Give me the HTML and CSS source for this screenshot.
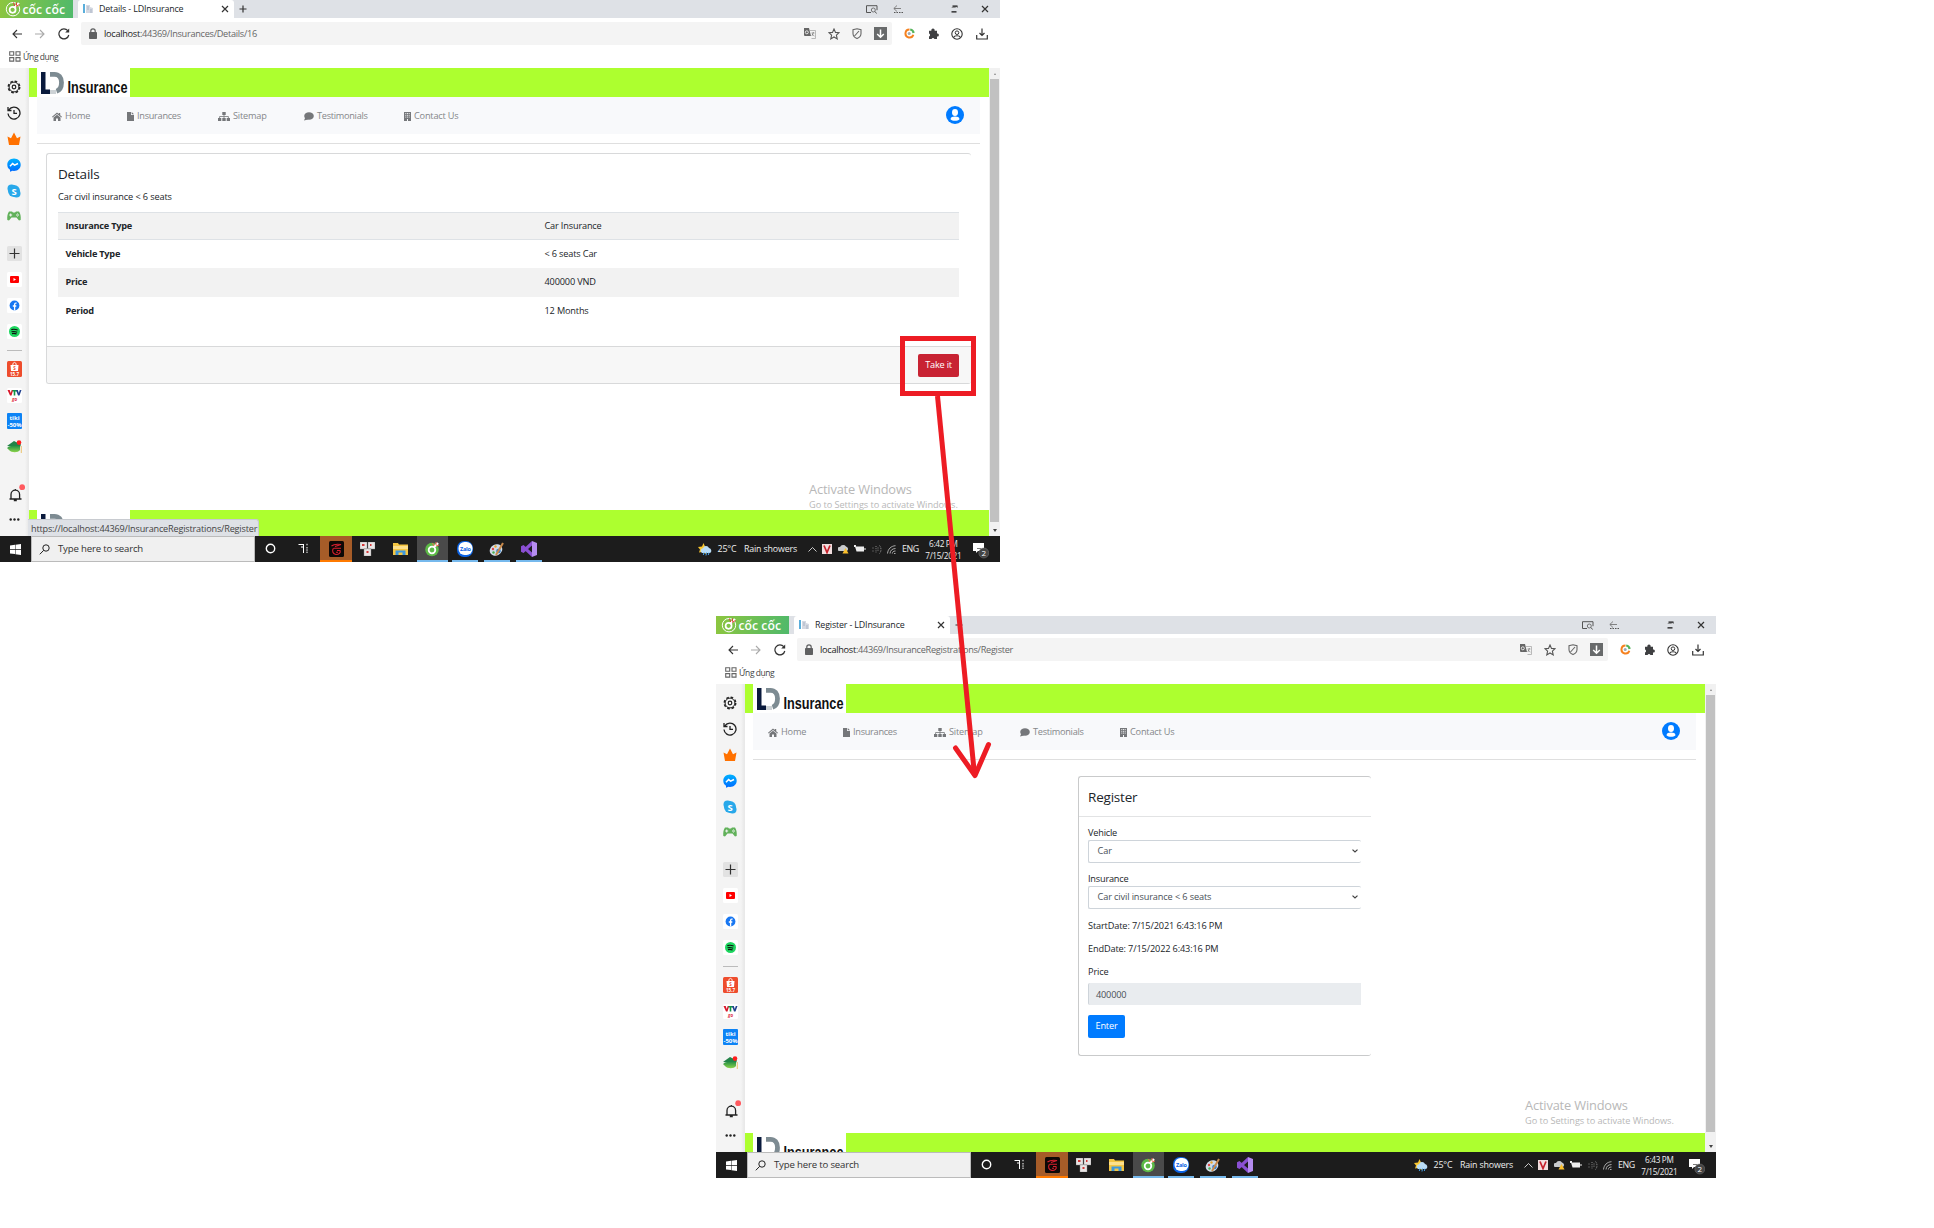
FILE: index.html
```html
<!DOCTYPE html>
<html lang="en">
<head>
<meta charset="utf-8">
<title>LDInsurance - registration flow</title>
<link rel="stylesheet" href="styles.css">
</head>
<body>
<svg class="defs" width="0" height="0">
  <defs>
    <linearGradient id="msg" x1="0" y1="0" x2="0" y2="1"><stop offset="0" stop-color="#00b2ff"/><stop offset="1" stop-color="#006aff"/></linearGradient>
    <linearGradient id="hatg" x1="0" y1="0" x2="0" y2="1"><stop offset="0" stop-color="#1e8a44"/><stop offset="1" stop-color="#8cd54a"/></linearGradient>
  </defs>
</svg>
<svg class="symbols">
  <symbol id="brand" viewBox="0 0 73 18">
    <circle cx="13" cy="9.2" r="6.7" fill="none" stroke="#fff" stroke-width="1"/>
    <circle cx="12.6" cy="9.8" r="3" fill="none" stroke="#fff" stroke-width="1.7"/>
    <path d="M14 8l5-5" stroke="#fff" stroke-width="2.4"/><path d="M13.5 2.500l1.200 3.500M16.500 2.500v3M19.500 4.500l-3.500 2" stroke="#e0403a" stroke-width="1"/>
    <text x="22.5" y="14" textLength="42.5" lengthAdjust="spacingAndGlyphs" class="brand-text">cốc cốc</text>
  </symbol>
  <symbol id="favicon" viewBox="0 0 12 12"><path d="M1 1h2v9H1z" fill="#5aaedb"/><path d="M4 2h4v8H4zM8 4l3 1v5H8" fill="#d5d9e2"/><path d="M5 4h2M5 6h2M9 6v4" stroke="#9aa4b8" stroke-width=".7"/></symbol>
  <symbol id="x" viewBox="0 0 8 8"><path d="M1 1l6 6M7 1L1 7" stroke="#333" stroke-width="1.2" fill="none"/></symbol>
  <symbol id="plus" viewBox="0 0 8 8"><path d="M4 .5v7M.5 4h7" stroke="#333" stroke-width="1.2"/></symbol>
  <symbol id="tabsearch" viewBox="0 0 12 9"><path d="M5 7.500H.5V.7h10.500v4.500" fill="none" stroke="#555" stroke-width="1"/><circle cx="7.300" cy="5" r="2" fill="none" stroke="#666" stroke-width=".9"/><path d="M9 6.500l1.500 2" stroke="#555"/></symbol>
  <symbol id="minim" viewBox="0 0 10 8"><path d="M4 .5L.8 3.5 4 6.5M1 3.5h7" stroke="#777" stroke-width=".9" fill="none"/><path d="M1 7.5h9" stroke="#555" stroke-dasharray="1.5 1"/></symbol>
  <symbol id="restore" viewBox="0 0 7 8"><path d="M1.5 1.2H6.5M.5 6.8H5.5" stroke="#111" stroke-width="1.3"/><path d="M6.3 1v2M.7 2.5h4" stroke="#555" stroke-width=".6"/></symbol>
  <symbol id="back" viewBox="0 0 10 10"><path d="M10 5H1M5 1L1 5l4 4" stroke="#333" stroke-width="1.1" fill="none"/></symbol>
  <symbol id="fwd" viewBox="0 0 10 10"><path d="M0 5h9M5 1l4 4-4 4" stroke="#aaa" stroke-width="1.1" fill="none"/></symbol>
  <symbol id="reload" viewBox="0 0 12 12"><path d="M10.8 7A5 5 0 1 1 9.8 2.7" stroke="#333" stroke-width="1.2" fill="none"/><path d="M11.2.5v4H7.2z" fill="#333"/></symbol>
  <symbol id="lock" viewBox="0 0 8 11"><rect x="0" y="4" width="8" height="7" rx=".8" fill="#5f6061"/><path d="M1.8 4.5V3a2.2 2.2 0 0 1 4.4 0v1.5" stroke="#5f6061" stroke-width="1.2" fill="none"/></symbol>
  <symbol id="translate" viewBox="0 0 12 11"><path d="M0 0h5l2 8H1a1 1 0 0 1-1-1z" fill="#666"/><path d="M6 2.5h5.5v8H7.5" fill="none" stroke="#aaa" stroke-width=".8"/><path d="M7.5 5h3M9.5 4l-1.6 4M8 6l2.4 2" stroke="#777" stroke-width=".7"/><circle cx="2.8" cy="4.3" r="1.5" fill="none" stroke="#fff" stroke-width=".8"/></symbol>
  <symbol id="star" viewBox="0 0 12 12"><path d="M6 1l1.5 3.4 3.6.3-2.7 2.5.8 3.7L6 9l-3.2 1.9.8-3.7L.9 4.7l3.6-.3z" fill="none" stroke="#555" stroke-width="1.1"/></symbol>
  <symbol id="shield" viewBox="0 0 10 12"><path d="M5 .8l4 .8v4c0 2.500-2 4.200-4 5-2-.8-4-2.500-4-5v-4z" fill="none" stroke="#666" stroke-width="1.100"/><path d="M2.500 8l4.500-5" stroke="#666" stroke-width="1.100"/></symbol>
  <symbol id="dlbox" viewBox="0 0 13 13"><path d="M0 0h13v13H0z" fill="#686a6b"/><path d="M6.500 2.500v7.500M3.200 7l3.300 3.200L9.800 7" stroke="#fff" stroke-width="1.500" fill="none"/></symbol>
  <symbol id="cring" viewBox="0 0 11 11"><path d="M5.500 1.500a4 4 0 1 0 3.800 5.200" fill="none" stroke="#f58220" stroke-width="2"/><path d="M6.200 1.500a4 4 0 0 1 3.400 3.500" fill="none" stroke="#56b45c" stroke-width="2.200"/><circle cx="5.200" cy="5.500" r="1.500" fill="#9ba9b5"/></symbol>
  <symbol id="puzzle" viewBox="0 0 11 11"><path d="M1 2.800h2.400a1.700 1.700 0 1 1 3.200 0H9v2.700a1.500 1.500 0 1 1 0 2.900V11H6.400a1.500 1.500 0 0 0-2.800 0H1V8.600a1.600 1.600 0 0 0 0-3z" fill="#3f4042"/></symbol>
  <symbol id="profile" viewBox="0 0 12 12"><circle cx="6" cy="6" r="5.200" fill="none" stroke="#333" stroke-width="1.100"/><circle cx="6" cy="4.700" r="1.800" fill="none" stroke="#333"/><path d="M2.500 9.500c1-2.300 6-2.300 7 0" fill="none" stroke="#333" stroke-width="1.100"/></symbol>
  <symbol id="tray" viewBox="0 0 12 12"><path d="M.7 7v4h10.600V7M6 .5v7M3.500 5L6 7.500 8.500 5" fill="none" stroke="#333" stroke-width="1.200"/></symbol>
  <symbol id="apps" viewBox="0 0 12 11"><path d="M.7.7h4v3.500h-4zM7 .7h4v3.500H7zM.7 6.600h4v3.500h-4zM7 6.600h4v3.500H7z" fill="none" stroke="#666" stroke-width="1.100"/></symbol>
  <symbol id="gear" viewBox="0 0 14 14"><circle cx="7" cy="7" r="5.700" fill="none" stroke="#222" stroke-width="1.500" stroke-dasharray="2.600 1.877"/><circle cx="7" cy="7" r="4.900" fill="none" stroke="#222" stroke-width="1"/><circle cx="7" cy="7" r="1.800" fill="none" stroke="#222" stroke-width="1.200"/></symbol>
  <symbol id="history" viewBox="0 0 14 14"><path d="M2 3.700A6 6 0 1 1 1 7.500M1 1v3.500h3.500M7 4v3.400h3" fill="none" stroke="#222" stroke-width="1.300"/></symbol>
  <symbol id="crown" viewBox="0 0 14 14"><path d="M.5 4.500L4 6.200 7 .5l3 5.700 3.500-1.700L12 13H2z" fill="#ff7100"/></symbol>
  <symbol id="messenger" viewBox="0 0 14 14"><path d="M7 .5c4 0 6.700 2.800 6.700 6.200S11 12.900 7 12.900l-1.500-.2L3 13.700v-2C1.200 10.600.3 8.900.3 6.700.3 3.300 3 .5 7 .5z" fill="url(#msg)"/><path d="M3 8.300l2.600-2.700 2 1.600L11 5.500" stroke="#fff" stroke-width="1.500" fill="none"/></symbol>
  <symbol id="skype" viewBox="0 0 14 14"><circle cx="4.500" cy="4.500" r="4" fill="#28a8ea"/><circle cx="9.500" cy="9.500" r="4" fill="#28a8ea"/><circle cx="7" cy="7" r="6" fill="#28a8ea"/><text x="7" y="10.600" text-anchor="middle" class="skype-s">S</text></symbol>
  <symbol id="gamepad" viewBox="0 0 14 10"><path d="M2 .5h3l1 1h2l1-1h3c1.500 2 2 5 1.700 8.500L12 9.500 9.500 6.500h-5L2 9.500.3 9C0 5.500.5 2.500 2 .5z" fill="#61b15a"/><path d="M3.700 2.500v3M2.200 4h3M9 4h1M11 4h1M10.500 2.500v1M10.500 4.500v1" stroke="#f4f4f4" stroke-width="1"/></symbol>
  <symbol id="plusbox" viewBox="0 0 15 15"><rect width="15" height="15" rx="1.500" fill="#e2e2e2"/><path d="M7.500 2.500v10M2.500 7.500h10" stroke="#333" stroke-width="1.200"/></symbol>
  <symbol id="youtube" viewBox="0 0 15 15"><rect width="15" height="15" rx="1.500" fill="#fff"/><rect x="3" y="4" width="9" height="7" rx="1" fill="#f00"/><path d="M6.500 6l2.500 1.500L6.500 9z" fill="#fff"/></symbol>
  <symbol id="facebook" viewBox="0 0 15 15"><rect width="15" height="15" rx="1.500" fill="#fff"/><circle cx="7.500" cy="7.500" r="4.900" fill="#1877f2"/><path d="M7.600 12.400V6.500c0-1.200.8-1.600 2-1.400M5.800 8h3.500" stroke="#fff" stroke-width="1.300" fill="none"/></symbol>
  <symbol id="spotify" viewBox="0 0 15 15"><rect width="15" height="15" rx="1.500" fill="#fff"/><circle cx="7.500" cy="7.500" r="5.500" fill="#1ed760"/><path d="M4.300 5.600c2.500-.6 4.500-.3 6.300.5M4.500 7.700c2-.5 4-.2 5.700.5M5 9.600c1.700-.4 3.200-.2 4.600.5" stroke="#111" stroke-width="1.100" fill="none"/></symbol>
  <symbol id="shopee" viewBox="0 0 15 16"><rect width="15" height="16" rx="1.500" fill="#ee4d2d"/><path d="M3.500 4h8l-.5 6H4z" fill="#fff"/><path d="M5.800 4c0-3.500 3.400-3.500 3.400 0" fill="none" stroke="#fff" stroke-width=".9"/><text x="7.500" y="9" text-anchor="middle" class="tiny red">S</text><text x="7.500" y="14.600" text-anchor="middle" class="tiny">15.7</text></symbol>
  <symbol id="vtv" viewBox="0 0 15 15"><rect width="15" height="15" rx="1.500" fill="#fff"/><path d="M.5 2h2.200l1 3 1-3h1.500L4.500 7.500H3z" fill="#d8172a"/><path d="M5.500 2H10v1.500H8.300v4H6.700v-4H5.500z" fill="#119447"/><path d="M9 2h1.800l1 3 1-3h1.700l-2 5.500h-1.500z" fill="#21418f"/><text x="7.500" y="12.500" text-anchor="middle" class="tiny go">go</text></symbol>
  <symbol id="tiki" viewBox="0 0 15 16"><rect width="15" height="16" rx="1" fill="#0d83f5"/><text x="7.500" y="7" text-anchor="middle" class="tiki">tiki</text><text x="7.500" y="13.500" text-anchor="middle" textLength="14" lengthAdjust="spacingAndGlyphs" class="tiki">-50%</text></symbol>
  <symbol id="hat" viewBox="0 0 15 14"><path d="M0 6l7-5L14 4.500 13 7z" fill="#238348"/><path d="M2 6.500c3-1.500 8-1.500 11 0V10c-2 3-8.500 3-11 0L0 8z" fill="url(#hatg)"/><path d="M14.300 6v7" stroke="#e8b64c" stroke-width=".8"/><circle cx="12" cy="2.600" r="2.300" fill="#ff1e1e"/></symbol>
  <symbol id="bell" viewBox="0 0 18 18"><path d="M2.500 15h12M4 15V10.500a4.300 4.300 0 0 1 8.600 0V15M8.300 5v1.200M6.800 16.500h3" fill="none" stroke="#222" stroke-width="1.300"/><circle cx="15.200" cy="3.200" r="2.900" fill="#ff5a5f"/></symbol>
  <symbol id="dots" viewBox="0 0 11 3"><circle cx="1.700" cy="1.500" r="1.200" fill="#222"/><circle cx="5.500" cy="1.500" r="1.200" fill="#222"/><circle cx="9.300" cy="1.500" r="1.200" fill="#222"/></symbol>
  <symbol id="ldlogo" viewBox="0 0 93 29"><path d="M4 4h4.500v17.500H13V26H4z" fill="#0a1a3c"/><path d="M13 6.300h4.500c4 0 7 3 7 8.300 0 5-2.200 7.800-5 8.700" fill="none" stroke="#7d8b92" stroke-width="4.800"/><path d="M14 22v4M16 22v4M18 22v4" stroke="#9aa5ab" stroke-width="1"/><text x="30.500" y="25" textLength="60" lengthAdjust="spacingAndGlyphs" class="ld-text">Insurance</text></symbol>
  <symbol id="home" viewBox="0 0 10 9"><path d="M0 4.800L5 .6l1.700 1.400V1h1.500v2.300L10 4.800l-.6.700L5 2 .6 5.500z" fill="#75777a"/><path d="M1.500 5.500L5 2.800l3.500 2.700V9H6V6.500H4V9H1.500z" fill="#75777a"/></symbol>
  <symbol id="file" viewBox="0 0 7 9"><path d="M0 0h4v3h3v6H0z" fill="#75777a"/><path d="M4.700 0L7 2.300H4.700z" fill="#75777a"/></symbol>
  <symbol id="sitemap" viewBox="0 0 12 9"><path d="M4.300 0h3.400v3H4.300zM0 6h3.300v3H0zM4.300 6h3.400v3H4.300zM8.700 6H12v3H8.700z" fill="#75777a"/><path d="M6 3v3M1.600 6V4.500h8.800V6" stroke="#75777a" fill="none" stroke-width=".8"/></symbol>
  <symbol id="comment" viewBox="0 0 10 9"><ellipse cx="5" cy="4" rx="4.800" ry="3.800" fill="#75777a"/><path d="M1.500 5L0 8.500l4-1z" fill="#75777a"/></symbol>
  <symbol id="building" viewBox="0 0 7 9"><path d="M0 0h7v9H0z" fill="#75777a"/><path d="M1.800 1v4.800M3.500 1v4.800M5.200 1v4.800" stroke="#f8f9fb" stroke-dasharray="1 .8" stroke-width=".9"/><path d="M3 7h1v2H3z" fill="#f8f9fb"/></symbol>
  <symbol id="user" viewBox="0 0 18 18"><circle cx="9" cy="9" r="9" fill="#007bff"/><ellipse cx="9" cy="6.500" rx="3" ry="3.400" fill="#fff"/><path d="M4.500 13.200c0-2 2-2.700 4.500-2.700s4.500.7 4.500 2.700c-2 2-7 2-9 0z" fill="#fff"/></symbol>
  <symbol id="chev" viewBox="0 0 6 4"><path d="M.5.600L3 3 5.500.6" fill="none" stroke="#444" stroke-width="1.200"/></symbol>
  <symbol id="win" viewBox="0 0 11 11"><path d="M0 1.500L5 .8V5H0zM5.500.7L11 0v5H5.500zM0 5.800h5v4.300L0 9.500zM5.500 5.800H11V11l-5.500-.7z" fill="#fff"/></symbol>
  <symbol id="mag" viewBox="0 0 11 11"><circle cx="7" cy="4" r="3.200" fill="none" stroke="#222" stroke-width="1"/><path d="M4.700 6.300L.8 10.300" stroke="#222" stroke-width="1"/></symbol>
  <symbol id="cortana" viewBox="0 0 11 11"><circle cx="5.500" cy="5.500" r="4.200" fill="none" stroke="#fff" stroke-width="1.400"/></symbol>
  <symbol id="taskview" viewBox="0 0 11 11"><path d="M.5 1.500h5M5.500 1v9M3 4h2.500" stroke="#fff" fill="none"/><path d="M9 .8v2M9 4v6" stroke="#fff" stroke-dasharray="1.500 .8"/></symbol>
  <symbol id="garena" viewBox="0 0 15 16"><rect width="15" height="16" rx="1.500" fill="#0d0806"/><path d="M2.500 5c3-2.500 6-2 9.500-1.500L6 5.500M4.500 7c-2 3-.5 6 2.500 6.500 3 0 5-1.500 4-4H8M5 7.300h7M7 11.200h2" stroke="#d92030" stroke-width="1.100" fill="none"/></symbol>
  <symbol id="cards" viewBox="0 0 15 14"><path d="M0 0h7v7H0zM8 0h7v7H8zM4 6.500h7V14H4z" fill="#e9e5e5" stroke="#888" stroke-width=".4"/><path d="M2 2h2.500v2H2zM10 2h1.500v2H10zM6.500 9h2v2h-2z" fill="#d43a3a"/></symbol>
  <symbol id="folder" viewBox="0 0 15 14"><path d="M0 1h5l1 1.500h9V13H0z" fill="#f5c642"/><path d="M0 4h15v3H0z" fill="#fde08c"/><path d="M2.500 13V8.500h10V13h-3v-2.500h-4V13z" fill="#3e98dd"/></symbol>
  <symbol id="coc" viewBox="0 0 15 16"><circle cx="7" cy="8.500" r="6.800" fill="#5cb947"/><circle cx="7" cy="9" r="3.300" fill="none" stroke="#fff" stroke-width="1.800"/><path d="M9 6l4-4" stroke="#fff" stroke-width="2.400"/><path d="M7.500 2l1.500 3M11 1v3M14 4l-3 1" stroke="#f36b4f" stroke-width="1"/></symbol>
  <symbol id="zalo" viewBox="0 0 16 16"><rect width="16" height="16" rx="7" fill="#0b63e5"/><rect x="1.500" y="1" width="14" height="13" rx="6" fill="#fff"/><text x="8.300" y="10" text-anchor="middle" class="zalo">Zalo</text></symbol>
  <symbol id="paint" viewBox="0 0 16 16"><ellipse cx="7" cy="9" rx="6.500" ry="5.500" transform="rotate(-30 7 9)" fill="#cfdce8"/><circle cx="4" cy="8" r="1.200" fill="#e04444"/><circle cx="6.500" cy="5.500" r="1.200" fill="#e7a52c"/><circle cx="4.500" cy="11.500" r="1.200" fill="#4caf50"/><circle cx="9.500" cy="10" r="2.300" fill="#2f7fd0"/><path d="M7 14l7-12" stroke="#c98a4b" stroke-width="2"/></symbol>
  <symbol id="vs" viewBox="0 0 16 16"><path d="M11 0l5 2v12l-5 2z" fill="#b58cf0"/><path d="M11 0v4.500L2.500 12 0 10.800V5.200L2.500 4 11 11.500V16L4 9.500 2 11V5l2 1.500z" fill="#8a4fd3"/></symbol>
  <symbol id="weather" viewBox="0 0 14 13"><path d="M5.500 0l1.500 3.500 3 1-2.500 2.500.5 4-4-2-3 .5 1-3L0 4l4-.5z" fill="#f8c52e"/><path d="M4 10a2.500 2.500 0 0 1 1-4.700 3.200 3.200 0 0 1 6-.3 2.700 2.700 0 0 1 1 5z" fill="#b9dcf5"/><path d="M6 9.500l-.7 2.500M8.500 9.500L8 12.500M11 9.500l-.7 2.500" stroke="#4aa3ea" stroke-width="1"/></symbol>
  <symbol id="up" viewBox="0 0 9 5"><path d="M.5 4.500l4-4 4 4" fill="none" stroke="#ddd" stroke-width=".9"/></symbol>
  <symbol id="vkey" viewBox="0 0 10 10"><path d="M0 0h10v10H0z" fill="#f1dede"/><path d="M2 1.500l3 7 3-7" fill="none" stroke="#c6202b" stroke-width="1.700"/></symbol>
  <symbol id="cloud" viewBox="0 0 11 10"><path d="M1 7a2 2 0 0 1 1-4 3.500 3.500 0 0 1 6-.500A2.500 2.500 0 0 1 9 7z" fill="#c9cbcd"/><path d="M7.500 4l3 5.500h-6z" fill="#fbc02d"/></symbol>
  <symbol id="battery" viewBox="0 0 12 8"><path d="M1 1.500h9v5H2.500z" fill="#eee"/><path d="M10.500 3h1v2h-1zM0 0h2v2H0z" fill="#eee"/></symbol>
  <symbol id="speaker" viewBox="0 0 10 9"><path d="M.5 3h2M.5 6h2M4 1v7M6 2.500v4" stroke="#aaa" stroke-width=".8" stroke-dasharray="1 1.200"/><path d="M7.500.5c2 2 2 6 0 8" fill="none" stroke="#999" stroke-width=".8" stroke-dasharray="1.500 1"/></symbol>
  <symbol id="wifi" viewBox="0 0 9 9"><path d="M.5 8.500C1 4 4 1 8.500.7M3 8.500c.3-3 2-4.800 5.500-5M5.300 8.500c.2-1.500 1-2.500 3.200-2.500M7 8.500h1.500" fill="none" stroke="#bbb" stroke-width=".9"/></symbol>
  <symbol id="notif" viewBox="0 0 16 16"><path d="M0 0h11v8H5l-2 2V8H0z" fill="#fff"/><circle cx="10.800" cy="10" r="5" fill="#444" stroke="#777" stroke-width=".5"/><path d="M4 5.500h4" stroke="#444" stroke-width=".7"/><text x="10.800" y="12.800" text-anchor="middle" class="badge">2</text></symbol>
</svg>

<div class="window details-window">
  <div class="tabstrip">
    <div class="brand"><svg width="73" height="18"><use href="#brand"/></svg></div>
    <div class="tab"><svg width="12" height="12"><use href="#favicon"/></svg><span class="tab-title">Details - LDInsurance</span><svg width="8" height="8"><use href="#x"/></svg></div>
    <svg class="newtab" width="8" height="8"><use href="#plus"/></svg>
    <div class="winctl"><svg width="12" height="9"><use href="#tabsearch"/></svg><svg width="10" height="8"><use href="#minim"/></svg><svg class="restore" width="7" height="8"><use href="#restore"/></svg><svg width="8" height="8"><use href="#x"/></svg></div>
  </div>
  <div class="toolbar">
    <svg width="10" height="10"><use href="#back"/></svg><svg width="10" height="10"><use href="#fwd"/></svg><svg width="12" height="12"><use href="#reload"/></svg>
    <div class="address"><svg width="8" height="11"><use href="#lock"/></svg><span class="url"><b>localhost</b>:44369/Insurances/Details/16</span>
      <div class="address-icons"><svg width="12" height="11"><use href="#translate"/></svg><svg width="12" height="12"><use href="#star"/></svg><svg width="10" height="12"><use href="#shield"/></svg><svg width="13" height="13"><use href="#dlbox"/></svg></div></div>
    <div class="ext"><svg width="11" height="11"><use href="#cring"/></svg><svg width="11" height="11"><use href="#puzzle"/></svg><svg width="12" height="12"><use href="#profile"/></svg><svg width="12" height="12"><use href="#tray"/></svg></div>
  </div>
  <div class="bookmarks"><svg width="12" height="11"><use href="#apps"/></svg><span>Ứng dụng</span></div>
  <div class="main">
    <div class="side">
      <svg width="14" height="14"><use href="#gear"/></svg><svg width="14" height="14"><use href="#history"/></svg><svg width="14" height="14"><use href="#crown"/></svg><svg width="14" height="14"><use href="#messenger"/></svg><svg width="14" height="14"><use href="#skype"/></svg><svg width="14" height="10"><use href="#gamepad"/></svg>
      <svg width="15" height="15"><use href="#plusbox"/></svg><svg width="15" height="15"><use href="#youtube"/></svg><svg width="15" height="15"><use href="#facebook"/></svg><svg width="15" height="15"><use href="#spotify"/></svg>
      <i class="rule"></i>
      <svg width="15" height="16"><use href="#shopee"/></svg><svg class="vtv" width="15" height="15"><use href="#vtv"/></svg><svg width="15" height="16"><use href="#tiki"/></svg><svg width="15" height="14"><use href="#hat"/></svg>
      <svg class="bell" width="18" height="18"><use href="#bell"/></svg><svg class="more" width="11" height="3"><use href="#dots"/></svg>
    </div>
    <div class="page">
      <div class="banner"><svg class="logo" width="93" height="29"><use href="#ldlogo"/></svg></div>
      <nav class="nav">
        <a class="n1"><svg width="10" height="9"><use href="#home"/></svg>Home</a><a class="n2"><svg width="7" height="9"><use href="#file"/></svg>Insurances</a><a class="n3"><svg width="12" height="9"><use href="#sitemap"/></svg>Sitemap</a><a class="n4"><svg width="10" height="9"><use href="#comment"/></svg>Testimonials</a><a class="n5"><svg width="7" height="9"><use href="#building"/></svg>Contact Us</a>
        <svg class="user" width="18" height="18"><use href="#user"/></svg>
      </nav>
      <hr>
      <section class="card details">
        <div class="details-body">
          <h4>Details</h4>
          <p>Car civil insurance &lt; 6 seats</p>
          <div class="table">
            <div class="row head"><b>Insurance Type</b><span>Car Insurance</span></div>
            <div class="row"><b>Vehicle Type</b><span>&lt; 6 seats Car</span></div>
            <div class="row odd"><b>Price</b><span>400000 VND</span></div>
            <div class="row"><b>Period</b><span>12 Months</span></div>
          </div>
        </div>
        <div class="card-footer"><button class="btn danger">Take it</button></div>
      </section>
      <div class="watermark"><div>Activate Windows</div><small>Go to Settings to activate Windows.</small></div>
      <div class="banner bottom"><svg class="logo" width="93" height="29"><use href="#ldlogo"/></svg></div>
    </div>
    <div class="scroll"><i class="arr-up"></i><i class="thumb"></i><i class="arr-down"></i></div>
    <div class="status">https://localhost:44369/InsuranceRegistrations/Register</div>
  </div>
  <div class="taskbar">
    <div class="start"><svg width="11" height="11"><use href="#win"/></svg></div>
    <div class="search"><svg width="11" height="11"><use href="#mag"/></svg><span>Type here to search</span></div>
    <div class="task w31"><svg width="11" height="11"><use href="#cortana"/></svg></div><div class="task w34"><svg width="11" height="11"><use href="#taskview"/></svg></div><div class="task garena"><svg width="15" height="16"><use href="#garena"/></svg></div><div class="task w31"><svg width="15" height="14"><use href="#cards"/></svg></div><div class="task w34"><svg width="15" height="14"><use href="#folder"/></svg></div><div class="task active"><svg width="15" height="16"><use href="#coc"/></svg></div><div class="task open"><svg width="16" height="16"><use href="#zalo"/></svg></div><div class="task open"><svg width="16" height="16"><use href="#paint"/></svg></div><div class="task open"><svg width="16" height="16"><use href="#vs"/></svg></div>
    <div class="systray"><svg width="14" height="13"><use href="#weather"/></svg><span class="temp">25°C</span><span class="rain">Rain showers</span><svg width="9" height="5"><use href="#up"/></svg><svg width="10" height="10"><use href="#vkey"/></svg><svg width="11" height="10"><use href="#cloud"/></svg><svg width="12" height="8"><use href="#battery"/></svg><svg width="10" height="9"><use href="#speaker"/></svg><svg width="9" height="9"><use href="#wifi"/></svg><span class="lang">ENG</span><span class="clock">6:42 PM<br>7/15/2021</span><svg class="notif" width="16" height="16"><use href="#notif"/></svg></div>
  </div>
</div>

<div class="window register-window">
  <div class="tabstrip">
    <div class="brand"><svg width="73" height="18"><use href="#brand"/></svg></div>
    <div class="tab"><svg width="12" height="12"><use href="#favicon"/></svg><span class="tab-title">Register - LDInsurance</span><svg width="8" height="8"><use href="#x"/></svg></div>
    <svg class="newtab" width="8" height="8"><use href="#plus"/></svg>
    <div class="winctl"><svg width="12" height="9"><use href="#tabsearch"/></svg><svg width="10" height="8"><use href="#minim"/></svg><svg class="restore" width="7" height="8"><use href="#restore"/></svg><svg width="8" height="8"><use href="#x"/></svg></div>
  </div>
  <div class="toolbar">
    <svg width="10" height="10"><use href="#back"/></svg><svg width="10" height="10"><use href="#fwd"/></svg><svg width="12" height="12"><use href="#reload"/></svg>
    <div class="address"><svg width="8" height="11"><use href="#lock"/></svg><span class="url"><b>localhost</b>:44369/InsuranceRegistrations/Register</span>
      <div class="address-icons"><svg width="12" height="11"><use href="#translate"/></svg><svg width="12" height="12"><use href="#star"/></svg><svg width="10" height="12"><use href="#shield"/></svg><svg width="13" height="13"><use href="#dlbox"/></svg></div></div>
    <div class="ext"><svg width="11" height="11"><use href="#cring"/></svg><svg width="11" height="11"><use href="#puzzle"/></svg><svg width="12" height="12"><use href="#profile"/></svg><svg width="12" height="12"><use href="#tray"/></svg></div>
  </div>
  <div class="bookmarks"><svg width="12" height="11"><use href="#apps"/></svg><span>Ứng dụng</span></div>
  <div class="main">
    <div class="side">
      <svg width="14" height="14"><use href="#gear"/></svg><svg width="14" height="14"><use href="#history"/></svg><svg width="14" height="14"><use href="#crown"/></svg><svg width="14" height="14"><use href="#messenger"/></svg><svg width="14" height="14"><use href="#skype"/></svg><svg width="14" height="10"><use href="#gamepad"/></svg>
      <svg width="15" height="15"><use href="#plusbox"/></svg><svg width="15" height="15"><use href="#youtube"/></svg><svg width="15" height="15"><use href="#facebook"/></svg><svg width="15" height="15"><use href="#spotify"/></svg>
      <i class="rule"></i>
      <svg width="15" height="16"><use href="#shopee"/></svg><svg class="vtv" width="15" height="15"><use href="#vtv"/></svg><svg width="15" height="16"><use href="#tiki"/></svg><svg width="15" height="14"><use href="#hat"/></svg>
      <svg class="bell" width="18" height="18"><use href="#bell"/></svg><svg class="more" width="11" height="3"><use href="#dots"/></svg>
    </div>
    <div class="page">
      <div class="banner"><svg class="logo" width="93" height="29"><use href="#ldlogo"/></svg></div>
      <nav class="nav">
        <a class="n1"><svg width="10" height="9"><use href="#home"/></svg>Home</a><a class="n2"><svg width="7" height="9"><use href="#file"/></svg>Insurances</a><a class="n3"><svg width="12" height="9"><use href="#sitemap"/></svg>Sitemap</a><a class="n4"><svg width="10" height="9"><use href="#comment"/></svg>Testimonials</a><a class="n5"><svg width="7" height="9"><use href="#building"/></svg>Contact Us</a>
        <svg class="user" width="18" height="18"><use href="#user"/></svg>
      </nav>
      <hr>
      <section class="card register">
        <h4>Register</h4>
        <form>
          <label>Vehicle</label>
          <div class="select"><span>Car</span><svg width="6" height="4"><use href="#chev"/></svg></div>
          <label class="second">Insurance</label>
          <div class="select"><span>Car civil insurance &lt; 6 seats</span><svg width="6" height="4"><use href="#chev"/></svg></div>
          <p class="start-date">StartDate: 7/15/2021 6:43:16 PM</p>
          <p class="end-date">EndDate: 7/15/2022 6:43:16 PM</p>
          <p>Price</p>
          <div class="readonly">400000</div>
          <button class="btn primary">Enter</button>
        </form>
      </section>
      <div class="watermark"><div>Activate Windows</div><small>Go to Settings to activate Windows.</small></div>
      <div class="banner bottom"><svg class="logo" width="93" height="29"><use href="#ldlogo"/></svg></div>
    </div>
    <div class="scroll"><i class="arr-up"></i><i class="thumb"></i><i class="arr-down"></i></div>
  </div>
  <div class="taskbar">
    <div class="start"><svg width="11" height="11"><use href="#win"/></svg></div>
    <div class="search"><svg width="11" height="11"><use href="#mag"/></svg><span>Type here to search</span></div>
    <div class="task w31"><svg width="11" height="11"><use href="#cortana"/></svg></div><div class="task w34"><svg width="11" height="11"><use href="#taskview"/></svg></div><div class="task garena"><svg width="15" height="16"><use href="#garena"/></svg></div><div class="task w31"><svg width="15" height="14"><use href="#cards"/></svg></div><div class="task w34"><svg width="15" height="14"><use href="#folder"/></svg></div><div class="task active"><svg width="15" height="16"><use href="#coc"/></svg></div><div class="task open"><svg width="16" height="16"><use href="#zalo"/></svg></div><div class="task open"><svg width="16" height="16"><use href="#paint"/></svg></div><div class="task open"><svg width="16" height="16"><use href="#vs"/></svg></div>
    <div class="systray"><svg width="14" height="13"><use href="#weather"/></svg><span class="temp">25°C</span><span class="rain">Rain showers</span><svg width="9" height="5"><use href="#up"/></svg><svg width="10" height="10"><use href="#vkey"/></svg><svg width="11" height="10"><use href="#cloud"/></svg><svg width="12" height="8"><use href="#battery"/></svg><svg width="10" height="9"><use href="#speaker"/></svg><svg width="9" height="9"><use href="#wifi"/></svg><span class="lang">ENG</span><span class="clock">6:43 PM<br>7/15/2021</span><svg class="notif" width="16" height="16"><use href="#notif"/></svg></div>
  </div>
</div>

<svg class="annotation" width="1934" height="1228">
  <rect x="902.500" y="338.500" width="71" height="55"/>
  <path d="M937.500 396L974.500 775" />
  <path class="tip" d="M955.500 748L975 775.500L988.500 744.500"/>
</svg>
</body>
</html>
```
FILE: styles.css
```css
* { box-sizing: border-box; }
body { margin: 0; width: 1934px; height: 1228px; position: relative; overflow: hidden; background: #fff; font: 9.2px/12px "Open Sans", "Noto Sans", sans-serif; letter-spacing: -.2px; color: #212529; }
svg { display: block; flex: none; }
.defs { position: absolute; }
.symbols { display: none; }
h4, p { margin: 0; font-weight: 400; }
i { display: block; }
b { font-weight: 700; }

.window { position: absolute; width: 1000px; height: 562px; display: flex; flex-direction: column; overflow: hidden; background: #fff; white-space: nowrap; }
.details-window { left: 0; top: 0; }
.register-window { left: 716px; top: 616px; }

.tabstrip { height: 18px; flex: none; display: flex; align-items: center; background: #dee1e6; }
.brand { width: 73px; height: 18px; background: linear-gradient(100deg, #8dc63f, #4fb96b); }
.brand-text { font: 600 13px "Open Sans", sans-serif; fill: #fff; letter-spacing: 0; }
.tab { width: 156px; height: 18px; margin-left: 5px; padding: 0 5px 0 4px; display: flex; align-items: center; background: #fff; border-radius: 3px 3px 0 0; }
.tab-title { flex: 1; padding-left: 5px; font-size: 8.9px; letter-spacing: -.15px; }
.newtab { margin-left: 5px; }
.winctl { margin-left: auto; padding-right: 11px; display: flex; align-items: center; gap: 15px; }
.winctl .restore { margin: 0 10px 0 32px; }
.winctl .restore { margin: 0 8px 0 33px; }

.toolbar { height: 27px; flex: none; display: flex; align-items: center; padding: 4px 12px 0 12px; gap: 13px; }
.address { flex: none; width: 811px; height: 23px; padding: 0 5px 0 8px; margin-left: -2px; display: flex; align-items: center; background: #f4f4f4; border-radius: 2px; }
.url { padding-left: 7px; color: #666; letter-spacing: -.29px; }
.url b { font-weight: 400; color: #222; }
.address-icons { margin-left: auto; display: flex; align-items: center; gap: 12px; }
.ext { flex: 1; margin-left: -1px; display: flex; align-items: center; justify-content: space-between; }

.bookmarks { height: 23px; flex: none; display: flex; align-items: center; gap: 2px; padding-left: 9px; font-size: 8.5px; color: #444; letter-spacing: -.45px; }

.main { position: relative; height: 468px; flex: none; display: flex; overflow: hidden; }
.side { width: 29px; flex: none; padding: 12px 1px 0 0; display: flex; flex-direction: column; align-items: center; gap: 12px; background: linear-gradient(90deg, #f4f4f4 25px, #e9e9e9 28px); }
.side > svg:nth-child(6) { margin: 1px 0 13px; }
.side > svg:nth-child(n+7) { margin-bottom: -1px; }
.rule { width: 15px; height: 1px; margin-bottom: -2px; background: #bbb; }
.side > .vtv:nth-child(n+7) { margin-bottom: -2px; }
.side .bell { margin-top: 19px; margin-left: 3px; }
.side .more { margin-top: 5px; }

.page { width: 960px; flex: none; display: flex; flex-direction: column; background: #fff; }
.banner { height: 29px; flex: none; padding-left: 8px; overflow: hidden; background: #adff2f; }
.details-window .bottom { height: 26px; }
.register-window .bottom { height: 19px; }
.logo { background: #fff; }
.ld-text { font: 700 17px "Liberation Sans Narrow", "Liberation Sans", sans-serif; fill: #111; letter-spacing: 0; }
.nav { height: 37px; flex: none; margin: 0 9px 0 8px; padding: 1px 16px 0 15px; display: flex; align-items: center; background: #f8f9fb; color: #85878a; }
.nav a { display: flex; align-items: center; gap: 3px; }
.n1 { width: 75px; } .n2 { width: 91px; } .n3 { width: 86px; } .n4 { width: 100px; }
.n2, .n4 { letter-spacing: -.28px; }
.nav .user { margin: -3px 0 0 auto; }
hr { width: 943px; height: 1px; flex: none; margin: 9px 9px 0 8px; border: 0; background: #dfdfdf; }
.card { flex: none; border: 1px solid #d8d9da; border-right: 0; border-radius: 3px; overflow: hidden; }
.details { width: 925px; height: 231px; margin: 9px 0 0 17px; }
.details-body { height: 192px; padding: 10px 12px 0 11px; }
h4 { font-size: 13.5px; line-height: 20px; font-weight: 500; }
.details-body p { margin-top: 5.5px; line-height: 14px; letter-spacing: -.12px; }
.table { margin-top: 8.500px; }
.row { height: 28.200px; padding: 0 8px 0 7.500px; display: grid; grid-template-columns: 479px 1fr; align-items: center; letter-spacing: -.17px; }
.row b { letter-spacing: -.23px; }
.head, .odd { background: #f2f2f2; }
.head { border-top: 1px solid #dee2e6; border-bottom: 1px solid #dee2e6; }
.card-footer { height: 38px; padding-right: 12px; display: flex; align-items: center; justify-content: flex-end; background: #f7f7f7; border-top: 1px solid #d8d9da; }
.btn { height: 23px; padding: 0 0 1px; border: 0; border-radius: 2px; color: #fff; font: inherit; letter-spacing: -.2px; }
.danger { width: 41px; background: #c82333; }
.primary { width: 37px; margin-top: 10px; background: #007bff; display: block; }
.watermark { width: 160px; margin: auto 0 -1px 780px; color: #b8b8b8; }
.watermark div { font-size: 12.800px; line-height: 17px; letter-spacing: -.15px; }
.watermark small { display: block; font-size: 9.200px; line-height: 13px; letter-spacing: -.05px; }
.register-window .watermark { margin-bottom: 6px; }

.register { width: 293px; height: 280px; margin: 16px 0 0 333px; border-color: #c9cacb; }
.register h4 { height: 40px; padding: 10px 0 0 9px; border-bottom: 1px solid #e2e3e4; }
form { padding: 10px 10px 0 9px; display: flex; flex-direction: column; }
label { height: 13px; line-height: 12px; }
.second { margin-top: 10.500px; }
.select { height: 22.500px; padding: 0 3.500px 0 8.500px; display: flex; align-items: center; justify-content: space-between; border: 1px solid #ced4da; border-right: 0; border-radius: 2px; color: #495057; letter-spacing: -.12px; }
form p { height: 23.400px; line-height: 11px; letter-spacing: -.14px; }
.start-date { margin-top: 11px; }
form p:nth-of-type(3) { height: 17px; }
.readonly { height: 22px; padding: 0 7px; line-height: 23px; background: #e9ecef; border-left: 1px solid #ced4da; border-radius: 2px 0 0 2px; color: #495057; }

.scroll { width: 11px; flex: none; padding: 0 1px; display: flex; flex-direction: column; align-items: center; background: #f1f1f1; }
.arr-up { margin: 5px 0 4px; border: 1.500px solid transparent; border-top: 0; border-bottom: 2px solid #888; }
.thumb { width: 9px; height: 443px; background: #c1c1c1; }
.register-window .thumb { height: 437px; }
.arr-down { margin-top: 7px; border: 2.500px solid transparent; border-bottom: 0; border-top: 3px solid #444; }
.register-window .arr-down { margin-top: 13px; }
.status { position: absolute; left: 28px; bottom: 0; width: 231px; height: 17px; padding: 3px 0 0 3px; background: #dee1e6; border: 1px solid #c8cbd0; border-width: 1px 1px 0 0; border-radius: 0 3px 0 0; color: #444; font-size: 9.100px; letter-spacing: -.17px; }

.taskbar { height: 26px; flex: none; display: flex; background: #1c1c1c; color: #eee; }
.start { width: 31px; display: flex; align-items: center; justify-content: center; }
.search { width: 224px; padding-left: 7px; display: flex; align-items: center; gap: 8px; background: #f0f0f0; border: 1px solid #bbb; color: #333; font-size: 9.600px; letter-spacing: -.17px; }
.task { display: flex; align-items: center; justify-content: center; border-bottom: 2px solid transparent; border-top: 1px solid transparent; }
.w31 { width: 31px; }
.w34 { width: 34px; }
.garena { width: 32px; background: #a65c28; border-color: #a65c28 #a65c28 #ff7a00; }
.active { width: 31px; background: #4a4a4a; border-top-color: #4a4a4a; border-bottom-color: #76b9ed; }
.open { width: 26px; margin-left: 4px; margin-right: 2px; border-bottom-color: #76b9ed; }
.systray { flex: none; width: 291px; margin-left: auto; margin-right: 11px; display: flex; align-items: center; justify-content: space-between; font-size: 8.900px; letter-spacing: -.17px; }
.rain { margin: 0 5px 0 2px; }
.lang { letter-spacing: -.4px; }
.clock { width: 40px; text-align: center; font-size: 8.200px; letter-spacing: -.3px; margin: 1px 4px 0 -1px; }
.notif { margin-top: 3px; }
.skype-s { font: 700 9.500px "Open Sans", sans-serif; fill: #fff; }
.tiny { font: 700 4.500px "Open Sans", sans-serif; fill: #fff; letter-spacing: 0; }
.red { fill: #ee4d2d; }
.go { fill: #e03a4a; font-style: italic; }
.tiki { font: 700 6px "Open Sans", sans-serif; fill: #fff; letter-spacing: 0; }
.zalo { font: 700 5.500px "Open Sans", sans-serif; fill: #0b63e5; }
.badge { font: 400 8px "Open Sans", sans-serif; fill: #fff; }

.annotation { position: absolute; left: 0; top: 0; fill: none; stroke: #ed1c24; stroke-width: 5; pointer-events: none; }
.tip { stroke-linecap: round; stroke-linejoin: round; }
```
